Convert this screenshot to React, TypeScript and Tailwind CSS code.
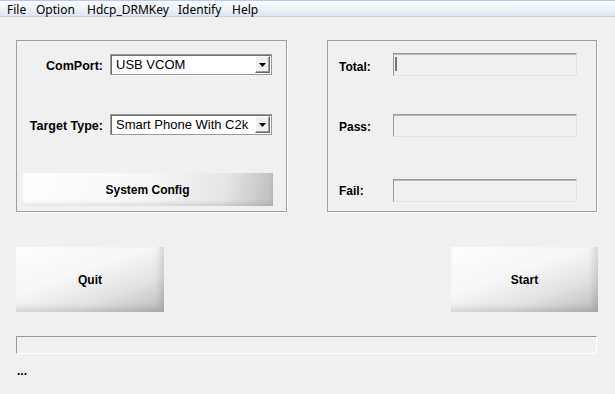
import React from 'react';

const menuItems = [
    { label: 'File', w: 'w-[29px]' },
    { label: 'Option', w: 'w-[51px]' },
    { label: 'Hdcp_DRMKey', w: 'w-[91px]' },
    { label: 'Identify', w: 'w-[54px]' },
    { label: 'Help', w: 'w-[30px]' },
];

const Combo = ({ value }: { value: string }) => (
    <div className="flex items-center h-[21px] w-[162px] bg-white border border-[#9a9a9a] shadow-[inset_1px_1px_0_#6e6e6e]">
        <span className="flex-1 pl-[5px] text-[13px] leading-none text-black whitespace-nowrap overflow-hidden">{value}</span>
        <div className="flex items-center justify-center w-[15px] h-[17px] mr-[1px] bg-[#f0f0f0] border-t border-l border-white border-r border-b border-r-[#696969] border-b-[#696969] shadow-[inset_-1px_-1px_0_#a0a0a0]">
            <svg width="7" height="4" viewBox="0 0 7 4">
                <path d="M0 0H7L3.5 4Z" fill="#000" />
            </svg>
        </div>
    </div>
);

const Field = ({ caret }: { caret?: boolean }) => (
    <div className="relative h-[23px] w-[184px] bg-[#f0f0f0] border-t border-l border-[#9a9a9a] border-r border-b border-r-[#e3e3e3] border-b-[#e3e3e3] shadow-[inset_0_1px_0_#b8b8b8]">
        {caret && <div className="absolute left-[1px] top-[3px] w-[2px] h-[14px] bg-[#777]" />}
    </div>
);

const BigButton = ({ label, className }: { label: string; className?: string }) => (
    <button className={`flex items-center justify-center h-[65px] text-[12px] font-bold text-black bg-[linear-gradient(160deg,#ffffff_0%,#f7f7f7_40%,#e2e2e2_70%,#b9b9b9_100%)] shadow-[inset_-4px_-3px_6px_rgba(0,0,0,0.12)] ${className ?? ''}`}>
        {label}
    </button>
);

export default function App() {
    return (
        <div className="w-[615px] h-[394px] bg-[#f0f0f0] flex flex-col overflow-hidden font-['Liberation_Sans',Arial,sans-serif] text-black">
            {/* menu bar */}
            <div className="h-[17px] flex items-center pl-[7px] pt-[3px] border-t border-[#b4cbe9] border-b border-b-[#c9d2e4] bg-[linear-gradient(180deg,#fbfcfe_0%,#f4f7fc_30%,#dde5f4_100%)] font-['Noto_Sans',sans-serif] text-[12px] leading-none">
                {menuItems.map((m) => (
                    <span key={m.label} className={`${m.w} whitespace-nowrap`}>{m.label}</span>
                ))}
            </div>

            <main className="flex flex-col px-4">
                <div className="flex gap-[40px] mt-[23px]">
                    {/* left group */}
                    <section className="w-[271px] h-[172px] border border-[#a0a0a0] shadow-[1px_1px_0_#ffffff] flex flex-col">
                        <div className="grid grid-cols-[86px_162px] gap-x-[7px] items-center mt-[13px]">
                            <label className="translate-y-[2px] text-right text-[12.5px] font-bold">ComPort:</label>
                            <Combo value="USB VCOM" />
                        </div>
                        <div className="grid grid-cols-[86px_162px] gap-x-[7px] items-center mt-[39px]">
                            <label className="translate-y-[2px] text-right text-[12.5px] font-bold whitespace-nowrap">Target Type:</label>
                            <Combo value="Smart Phone With C2k" />
                        </div>
                        <button className="mt-[38px] ml-[5px] w-[251px] h-[33px] flex items-center justify-center text-[12px] font-bold bg-[linear-gradient(100deg,#ffffff_0%,#f8f8f8_45%,#e6e6e6_80%,#bdbdbd_100%)] shadow-[inset_0_-3px_4px_rgba(0,0,0,0.10)]">
                            System Config
                        </button>
                    </section>

                    {/* right group */}
                    <section className="w-[270px] h-[172px] border border-[#a0a0a0] shadow-[1px_1px_0_#ffffff] flex flex-col pl-[11px]">
                        <div className="flex items-center mt-[12px]">
                            <label className="w-[54px] translate-y-[2px] text-[12px] font-bold">Total:</label>
                            <Field caret />
                        </div>
                        <div className="flex items-center mt-[38px]">
                            <label className="w-[54px] translate-y-[1px] text-[12px] font-bold">Pass:</label>
                            <Field />
                        </div>
                        <div className="flex items-center mt-[42px]">
                            <label className="w-[54px] text-[12px] font-bold">Fail:</label>
                            <Field />
                        </div>
                    </section>
                </div>

                <div className="flex justify-between mt-[35px] w-[582px]">
                    <BigButton label="Quit" className="w-[148px]" />
                    <BigButton label="Start" className="w-[147px]" />
                </div>

                <div className="mt-[24px] w-[581px] h-[18px] border-t border-l border-[#9a9a9a] border-r border-b border-r-white border-b-white" />

                <div className="mt-[11px] ml-[1px] text-[12px] font-bold leading-none">...</div>
            </main>
        </div>
    );
}
